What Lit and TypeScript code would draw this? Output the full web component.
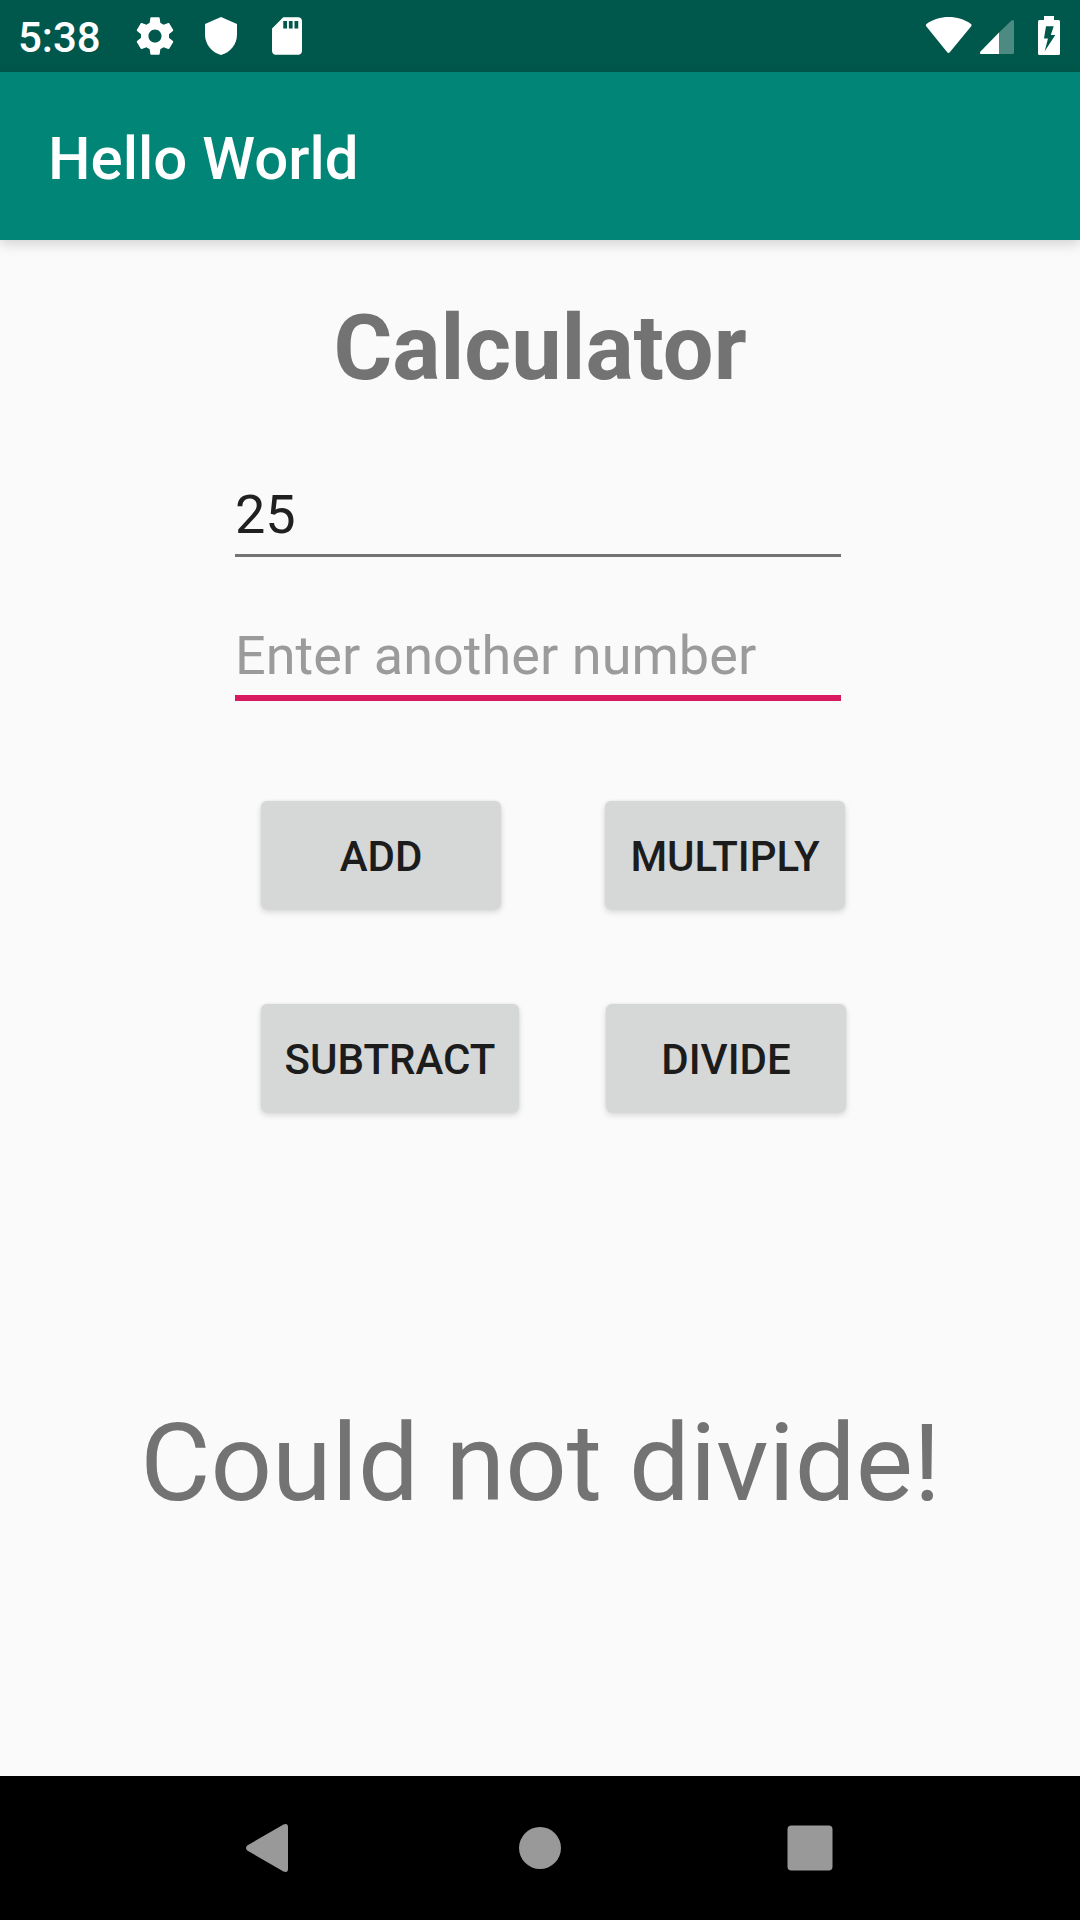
import { LitElement, html, css, svg } from "lit";
import { customElement, property } from "lit/decorators.js";

@customElement("status-bar")
class StatusBar extends LitElement {
  static styles = css`
    :host { display: flex; align-items: center; justify-content: space-between; box-sizing: border-box;
      height: 72px; background: #00574b; color: #fff; }
    .side { display: flex; align-items: center; height: 72px; }
    .clock { font-size: 42px; line-height: 72px; font-weight: 500; padding: 3px 0 0 18px; width: 132px; box-sizing: border-box; white-space: nowrap; }
    svg { display: block; fill: #fff; }
    .faint { fill: #4d8a81; }
    .cut { fill: #00574b; }
  `;
  render() {
    return html`
      <div class="side">
        <span class="clock">5:38</span>
        <svg width="198" height="72" viewBox="132 0 198 72">
          <g transform="translate(132.5 13.5) scale(1.875)">
            <path d="M19.43 12.98c.04-.32.07-.64.07-.98s-.03-.66-.07-.98l2.11-1.65c.19-.15.24-.42.12-.64l-2-3.46c-.12-.22-.39-.3-.61-.22l-2.49 1c-.52-.4-1.08-.73-1.69-.98l-.38-2.65C14.46 2.18 14.25 2 14 2h-4c-.25 0-.46.18-.49.42l-.38 2.65c-.61.25-1.17.59-1.69.98l-2.49-1c-.23-.09-.49 0-.61.22l-2 3.46c-.13.22-.07.49.12.64l2.11 1.65c-.04.32-.07.65-.07.98s.03.66.07.98l-2.11 1.65c-.19.15-.24.42-.12.64l2 3.46c.12.22.39.3.61.22l2.49-1c.52.4 1.08.73 1.69.98l.38 2.65c.03.24.24.42.49.42h4c.25 0 .46-.18.49-.42l.38-2.65c.61-.25 1.17-.59 1.69-.98l2.49 1c.23.09.49 0 .61-.22l2-3.46c.12-.22.07-.49-.12-.64l-2.11-1.65zM12 15.5c-1.93 0-3.5-1.57-3.5-3.5s1.57-3.5 3.5-3.5 3.5 1.57 3.5 3.5-1.57 3.5-3.5 3.5z"/>
          </g>
          <path d="M221 17L205 24V34.500C205 44.500 211.800 52.500 221 55C230.200 52.500 237 44.500 237 34.500V24Z"/>
          <g transform="translate(264.500 13.500) scale(1.875)">
            <path d="M18 2h-8L4.020 8 4 20c0 1.100.9 2 2 2h12c1.100 0 2-.9 2-2V4c0-1.100-.9-2-2-2zm-6 6h-2V4h2v4zm3 0h-2V4h2v4zm3 0h-2V4h2v4z"/>
          </g>
        </svg>
      </div>
      <svg width="160" height="72" viewBox="920 0 160 72">
        <path d="M947.200 52.300L926.200 26.200Q925.200 24.900 926.500 23.900C939 14.700 958.500 14.700 971 23.900Q972.300 24.900 971.200 26.200L949.800 52.300Q948.500 53.800 947.200 52.300Z"/>
        <path class="faint" d="M999 32.500L1011.500 20.500Q1014 19 1014 21.500V52.500Q1014 54 1012.500 54H999Z"/>
        <path d="M999 32.500V54H981Q979.200 53.500 980.500 51.500Z"/>
        <path d="M1044 16H1054V20H1058.500Q1060 20 1060 21.500V53.500Q1060 55 1058.500 55H1039.500Q1038 55 1038 53.500V21.500Q1038 20 1039.500 20H1044Z"/>
        <path class="cut" d="M1046 26.300H1053.700L1050.800 35H1055.300L1044.700 51.200L1048 38.500H1044Z"/>
      </svg>
    `;
  }
}

@customElement("calc-field")
class CalcField extends LitElement {
  @property() value = "";
  @property() hint = "";
  @property({ type: Boolean }) active = false;
  static styles = css`
    :host { display: block; width: 606px; }
    .text { height: 80px; line-height: 82px; font-size: 54px; color: #202020; white-space: nowrap; }
    .hint { color: #9b9b9b; letter-spacing: 0.04px; }
    .line { height: 3px; background: #737373; }
    .active { height: 6px; background: #d81b60; }
  `;
  render() {
    return html`
      <div class="text ${this.value ? "" : "hint"}">${this.value || this.hint}</div>
      <div class="line ${this.active ? "active" : ""}"></div>
    `;
  }
}

@customElement("app-root")
class AppRoot extends LitElement {
  static styles = css`
    :host { display: flex; flex-direction: column; width: 1080px; height: 1920px; overflow: hidden;
      background: #fafafa; font-family: Roboto, "Liberation Sans", sans-serif; }
    .toolbar { flex: none; height: 168px; box-sizing: border-box; padding: 4px 0 0 48px; background: #008577; color: #fff;
      font-size: 60px; font-weight: 500; line-height: 165px; white-space: nowrap;
      box-shadow: 0 4px 12px rgba(0, 0, 0, 0.16); }
    .content { flex: 1; display: flex; flex-direction: column; align-items: center; }
    .heading { margin: 57px 0 0; height: 105px; line-height: 104px; font-size: 90px; font-weight: 700; color: #737373; }
    .fields { display: flex; flex-direction: column; gap: 58px; margin-top: 72px; align-self: flex-start; padding-left: 235px; }
    .row { display: flex; align-self: flex-start; padding-left: 261px; }
    .first { margin-top: 100px; gap: 104px; }
    .second { margin-top: 95px; gap: 87px; }
    .btn { display: block; box-sizing: border-box; height: 108px; width: 240px; padding: 3px 0 0; border: 0; border-radius: 6px;
      background: #d6d7d7; color: #1c1c1c; font: 500 42px/105px Roboto, "Liberation Sans", sans-serif; text-align: center;
      box-shadow: 0 3px 6px rgba(0, 0, 0, 0.15), 0 0 3px rgba(0, 0, 0, 0.07); }
    .wide { width: 258px; }
    .result { margin-top: 287px; height: 128px; line-height: 128px; font-size: 108px; color: #737373; white-space: nowrap; padding-left: 1px; }
    .nav { flex: none; height: 144px; background: #000; display: flex; justify-content: center; align-items: center; }
    .nav svg { display: block; fill: #999; }
  `;
  render() {
    return html`
      <status-bar></status-bar>
      <div class="toolbar">Hello World</div>
      <div class="content">
        <h1 class="heading">Calculator</h1>
        <div class="fields">
          <calc-field value="25"></calc-field>
          <calc-field hint="Enter another number" active></calc-field>
        </div>
        <div class="row first">
          <button class="btn">ADD</button>
          <button class="btn">MULTIPLY</button>
        </div>
        <div class="row second">
          <button class="btn wide">SUBTRACT</button>
          <button class="btn">DIVIDE</button>
        </div>
        <div class="result">Could not divide!</div>
      </div>
      <div class="nav">
        <svg width="1080" height="144" viewBox="0 1776 1080 144">
          ${svg`<path d="M247.200 1845.500L283.500 1824.500Q288 1823 288 1827V1869Q288 1873 283.500 1871.500L247.200 1850.500Q244.800 1848 247.200 1845.500Z"/>
          <circle cx="540" cy="1848" r="21"/>
          <rect x="787.500" y="1825.500" width="45" height="45" rx="4"/>`}
        </svg>
      </div>
    `;
  }
}
